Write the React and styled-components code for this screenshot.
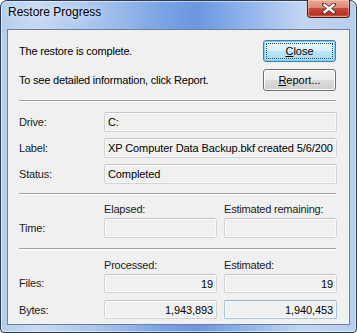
import React from 'react';
import styled, { createGlobalStyle } from 'styled-components';

const Global = createGlobalStyle`
  html, body {
    margin: 0;
    padding: 0;
    background: #ffffff;
  }
`;

const Frame = styled.div`
  box-sizing: border-box;
  width: 357px;
  height: 333px;
  padding: 0 6px 7px 6px;
  border: 1px solid #2c3b52;
  border-radius: 7px 7px 4px 4px;
  background: linear-gradient(90deg, #b3cdee 0%, #c7daf3 10%, #a6c2ec 28%, #7ba4e4 45%, #6a97e0 55%, #93b5ea 70%, #c2d6f2 85%, #b6cded 100%);
  box-shadow: inset 0 0 0 1px rgba(255, 255, 255, 0.55);
  display: flex;
  flex-direction: column;
  font-family: "Liberation Sans", Arial, sans-serif;
`;

const TitleBar = styled.div`
  height: 28px;
  display: flex;
  justify-content: space-between;
  align-items: flex-start;
`;

const Title = styled.div`
  padding: 4px 0 0 1px;
  font-size: 12px;
  color: #000;
  text-shadow: 0 0 6px rgba(255, 255, 255, 0.9);
`;

const CloseX = styled.div`
  width: 43px;
  height: 18px;
  margin-top: -1px;
  box-sizing: border-box;
  border: 1px solid #4a1e1a;
  border-top: none;
  border-radius: 0 0 4px 4px;
  background: linear-gradient(180deg, #e9a996 0%, #dd8a76 45%, #c74a38 50%, #b93122 85%, #d86a4c 100%);
  box-shadow: inset 0 0 0 1px rgba(255, 210, 200, 0.5);
  display: flex;
  align-items: center;
  justify-content: center;
`;

const Content = styled.div`
  flex: 1;
  box-sizing: border-box;
  border: 1px solid #6d7f9c;
  background: #f0f0f0;
  padding: 10px 12px 0 11px;
  display: flex;
  flex-direction: column;
  font-size: 11px;
  letter-spacing: -0.2px;
  color: #000;
`;

const TopRow = styled.div`
  display: flex;
  align-items: center;
  justify-content: space-between;
  height: 22px;
  margin-bottom: ${p => p.$gap || 0}px;
`;

const Button = styled.div`
  box-sizing: border-box;
  width: 73px;
  height: 22px;
  margin-right: 1px;
  border: 1px solid ${p => (p.$focus ? '#3c7fb1' : '#707070')};
  border-radius: 3px;
  background: ${p =>
    p.$focus
      ? 'linear-gradient(180deg, #eaf6fd 0%, #d9f0fc 50%, #bee6fd 51%, #a7d9f5 100%)'
      : 'linear-gradient(180deg, #f2f2f2 0%, #ebebeb 50%, #dddddd 51%, #cfcfcf 100%)'};
  box-shadow: inset 0 0 0 1px ${p => (p.$focus ? '#7fd0f2' : '#fcfcfc')};
  display: flex;
  align-items: center;
  justify-content: center;
  font-size: 11px;
  letter-spacing: 0;
  position: relative;

  &::after {
    content: '';
    display: ${p => (p.$focus ? 'block' : 'none')};
    position: absolute;
    inset: 2px;
    border: 1px dotted #1f4a66;
  }
`;

const Separator = styled.div`
  grid-column: 1 / -1;
  height: 1px;
  background: #a0a0a0;
  border-bottom: 1px solid #ffffff;
  margin: ${p => p.$top}px 1px ${p => p.$bottom}px 0;
`;

const Fields = styled.div`
  display: grid;
  grid-template-columns: 78px 113px 113px;
  column-gap: 7px;
  align-items: center;
`;

const Label = styled.div`
  color: #1b1b1b;
  grid-row: span ${p => p.$span || 1};
  align-self: ${p => (p.$span ? 'end' : 'center')};
  padding-bottom: ${p => (p.$span ? 4 : 0)}px;
  margin-top: ${p => p.$mt || 0}px;
`;

const Head = styled.div`
  color: #1b1b1b;
  height: 13px;
  margin-bottom: 2px;
  line-height: 13px;
`;

const Box = styled.div`
  box-sizing: border-box;
  height: ${p => p.$h || 20}px;
  grid-column: ${p => (p.$wide ? '2 / 4' : 'auto')};
  margin-top: ${p => p.$mt || 0}px;
  border: 1px solid ${p => (p.$hover ? '#a7c6de' : '#d3d3d3')};
  border-top-color: ${p => (p.$hover ? '#8eb2d0' : '#c6c6c6')};
  border-radius: 2px;
  box-shadow: inset 0 0 0 1px #fafafa;
  background: #f0f0f0;
  padding: 0 3px 0 3px;
  display: flex;
  align-items: center;
  justify-content: ${p => (p.$right ? 'flex-end' : 'flex-start')};
  font-size: 11px;
  letter-spacing: -0.1px;
  color: #000;
  white-space: nowrap;
  overflow: hidden;
`;

const Cross = () => (
  <svg width="14" height="11" viewBox="0 0 14 11">
    <path d="M2 1.5 L12 9.5 M12 1.5 L2 9.5" stroke="#5a2a24" strokeWidth="4" strokeLinecap="square" />
    <path d="M2.5 2 L11.5 9 M11.5 2 L2.5 9" stroke="#ffffff" strokeWidth="2.4" strokeLinecap="square" />
  </svg>
);

const U = styled.span`
  text-decoration: underline;
`;

export default function App() {
  return (
    <>
      <Global />
      <Frame>
        <TitleBar>
          <Title>Restore Progress</Title>
          <CloseX><Cross /></CloseX>
        </TitleBar>
        <Content>
          <TopRow $gap={7}>
            <span>The restore is complete.</span>
            <Button $focus><span><U>C</U>lose</span></Button>
          </TopRow>
          <TopRow>
            <span>To see detailed information, click Report.</span>
            <Button><span><U>R</U>eport...</span></Button>
          </TopRow>
          <Fields>
            <Separator $top={9} $bottom={10} />
            <Label>Drive:</Label>
            <Box $wide>C:</Box>
            <Label $mt={6}>Label:</Label>
            <Box $wide $mt={6}>XP Computer Data Backup.bkf created 5/6/200</Box>
            <Label $mt={6}>Status:</Label>
            <Box $wide $mt={6}>Completed</Box>
            <Separator $top={9} $bottom={8} />
            <Label $span={2}>Time:</Label>
            <Head>Elapsed:</Head>
            <Head>Estimated remaining:</Head>
            <Box />
            <Box />
            <Separator $top={10} $bottom={9} />
            <Label $span={2}>Files:</Label>
            <Head>Processed:</Head>
            <Head>Estimated:</Head>
            <Box $right $h={19}>19</Box>
            <Box $right $h={19}>19</Box>
            <Label $mt={7}>Bytes:</Label>
            <Box $right $h={19} $mt={7}>1,943,893</Box>
            <Box $right $h={19} $mt={7} $hover>1,940,453</Box>
          </Fields>
        </Content>
      </Frame>
    </>
  );
}
